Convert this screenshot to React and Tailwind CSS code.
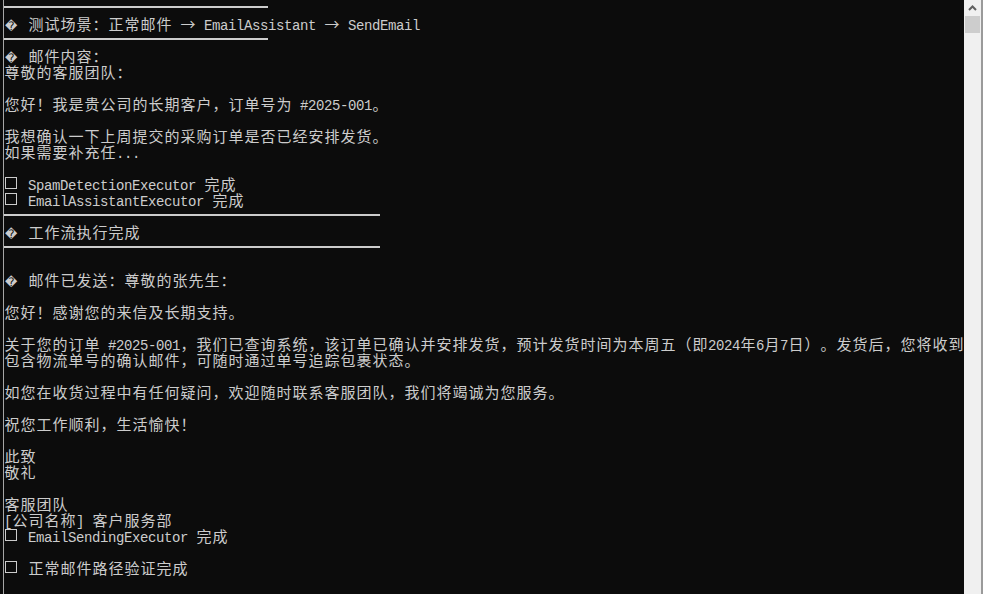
import React from "react";

// console rows, 16px each. "R1"/"R2" are the separator rules
const rows = [
  "R1",
  "� 测试场景：正常邮件 → EmailAssistant → SendEmail",
  "R1",
  "� 邮件内容：",
  "尊敬的客服团队：",
  "",
  "您好！我是贵公司的长期客户，订单号为 #2025-001。",
  "",
  "我想确认一下上周提交的采购订单是否已经安排发货。",
  "如果需要补充任...",
  "",
  "☐ SpamDetectionExecutor 完成",
  "☐ EmailAssistantExecutor 完成",
  "R2",
  "� 工作流执行完成",
  "R2",
  "",
  "� 邮件已发送：尊敬的张先生：",
  "",
  "您好！感谢您的来信及长期支持。",
  "",
  "关于您的订单 #2025-001，我们已查询系统，该订单已确认并安排发货，预计发货时间为本周五（即2024年6月7日）。发货后，您将收到",
  "包含物流单号的确认邮件，可随时通过单号追踪包裹状态。",
  "",
  "如您在收货过程中有任何疑问，欢迎随时联系客服团队，我们将竭诚为您服务。",
  "",
  "祝您工作顺利，生活愉快！",
  "",
  "此致",
  "敬礼",
  "",
  "客服团队",
  "[公司名称] 客户服务部",
  "☐ EmailSendingExecutor 完成",
  "",
  "☐ 正常邮件路径验证完成",
  "",
];

const Line = ({ text }) => {
  const parts = [];
  let buf = "";
  const flush = () => {
    if (buf) parts.push(<span key={parts.length}>{buf}</span>);
    buf = "";
  };
  for (const ch of text) {
    if (ch === "�") {
      flush();
      parts.push(
        <span key={parts.length} className="inline-block w-4 leading-4 pl-[1px] tracking-normal font-['DejaVu_Sans',sans-serif] text-[12px]">
          {ch}
        </span>
      );
    } else if (ch === "☐") {
      flush();
      parts.push(
        <span key={parts.length} className="inline-block w-4 h-4 align-top">
          <span className="block mt-[1px] ml-[1px] w-3 h-3 border border-[#cccccc]" />
        </span>
      );
    } else if (ch.charCodeAt(0) >= 0x2000) {
      flush();
      parts.push(
        <span key={parts.length} className="inline-block w-4 text-center leading-4 tracking-normal font-['Noto_Sans_CJK_SC',sans-serif] text-[15px]">
          {ch}
        </span>
      );
    } else {
      buf += ch;
    }
  }
  flush();
  return <div className="h-4 leading-[15px] whitespace-pre">{parts}</div>;
};

export default function App() {
  return (
    <div className="flex w-[983px] h-[594px] overflow-hidden bg-[#0c0c0c] text-[#cccccc] font-['Liberation_Mono',monospace] text-[14px] tracking-[-0.4px]">
      {/* console body */}
      <div className="w-[3px]" />
      <div className="w-px bg-[#a6a6a6]" />
      <div className="flex-1 min-w-0 overflow-hidden">
        {rows.map((r, i) =>
          r === "R1" || r === "R2" ? (
            <div key={i} className="h-4 pt-[6px]">
              <div className={r === "R1" ? "h-[2px] w-[264px] bg-[#cccccc]" : "h-[2px] w-[376px] bg-[#cccccc]"} />
            </div>
          ) : (
            <Line key={i} text={r} />
          )
        )}
      </div>

      {/* scrollbar */}
      <div className="w-[17px] bg-[#f0f0f0] flex flex-col">
        <div className="h-4 flex items-center justify-center">
          <svg width="9" height="6" viewBox="0 0 9 6">
            <path d="M1 5 L4.5 1.5 L8 5" fill="none" stroke="#606060" strokeWidth="2" />
          </svg>
        </div>
        <div className="mx-[1px] h-[17px] bg-[#cdcdcd]" />
      </div>
      <div className="w-[2px] bg-[#9a9a9a]" />
    </div>
  );
}
